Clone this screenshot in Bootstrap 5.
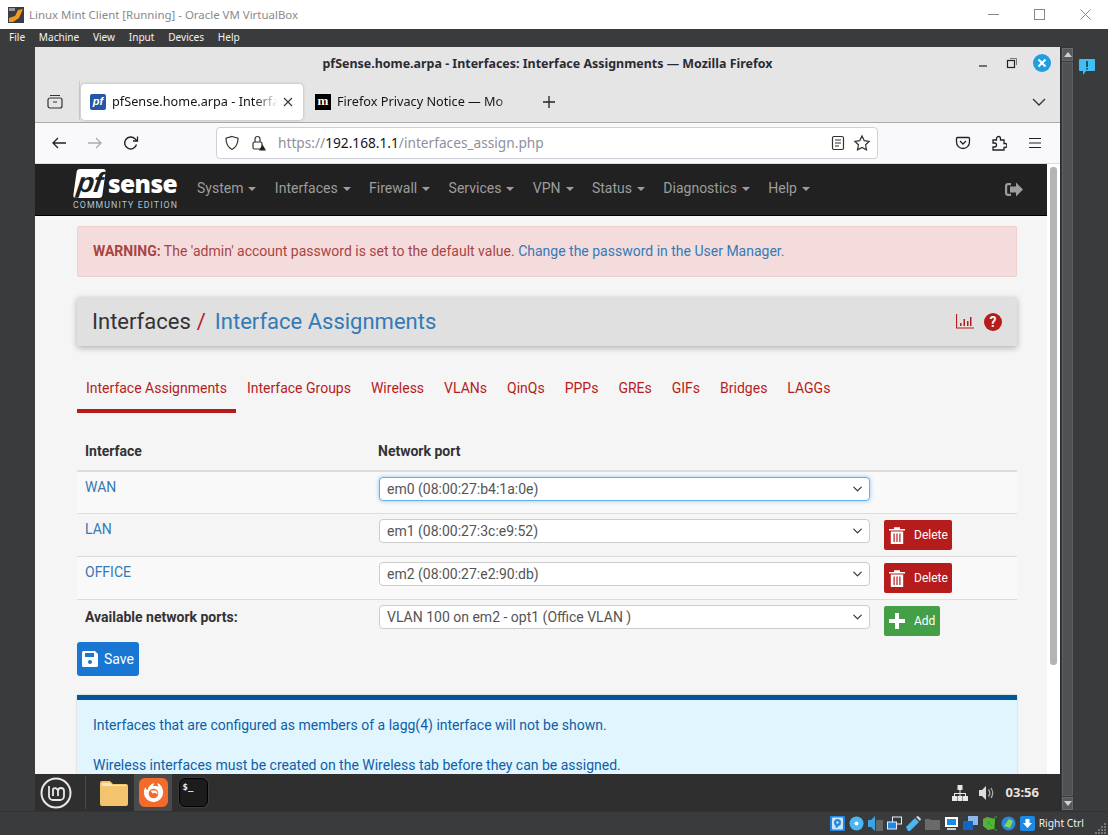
<!DOCTYPE html>
<html lang="en">
<head>
    <meta charset="UTF-8">
    <meta name="viewport" content="width=device-width, initial-scale=1.0">
    <title>Linux Mint Client [Running] - Oracle VM VirtualBox</title>
    <link href="https://cdn.jsdelivr.net/npm/bootstrap@5.3.0/dist/css/bootstrap.min.css" rel="stylesheet">
    <style>
        html, body { height: 835px; overflow: hidden; }
        body { font-family: "Noto Sans", sans-serif; background: #3a3b3d; }
        /* VirtualBox window */
        .vb-title { height: 29px; background: #fff; color: #8a8a8a; font-size: 11.45px; padding-left: 8px; }
        .vb-title svg.vb-logo { margin-right: 5px; }
        .vb-winbtns span { width: 46px; display: flex; justify-content: center; }
        .vb-menu { height: 18px; background: #3a3b3d; color: #f2f2f2; font-size: 10.1px; padding-left: 9px; gap: 13.7px; }
        .vb-main { height: 764px; }
        .vb-gutter { width: 35px; background: #3a3b3d; flex: none; }
        .vb-screen { width: 1025px; flex: none; }
        .vb-scroll { width: 14px; flex: none; background: #36373a; border-left: 1px solid #2a2b2d; padding: 1px 1px; gap: 1px; }
        .vb-scroll .arrow { height: 13px; background: #57585a; border: 1px solid #6a6b6d; flex: none; }
        .vb-scroll .thumb { flex: 1; background: #505153; border: 1px solid #5f6062; }
        .vb-side { flex: 1; background: #3a3b3d; padding: 12px 0 0 5px; }
        .vb-status { height: 24px; background: #3a3b3d; color: #f0f0f0; font-size: 10.3px; padding-right: 2px; gap: 4px; border-top: 1px solid #333; }

        /* Firefox */
        .ff-win { flex: 1; min-height: 0; background: #e5e5e5; }
        .ff-title { height: 34px; flex: none; font-size: 12.45px; font-weight: 700; color: #2b2b33; position: relative; }
        .ff-winbtns { position: absolute; right: 8px; top: 7px; gap: 13px; }
        .ff-close { width: 18px; height: 18px; border-radius: 50%; background: #1f9ee0; margin-right: 1px; }
        .ff-tabs { height: 42px; flex: none; border-bottom: 1px solid #aaa; padding-top: 3px; position: relative; }
        .ff-tabview { width: 45px; border-right: 1px solid #ccc; height: 39px; margin-top: -3px; padding-top: 3px; padding-right: 4px; flex: none; }
        .ff-tab { height: 36px; font-size: 12.7px; color: #15141a; white-space: nowrap; overflow: hidden; }
        .ff-tab.active { width: 222px; margin-left: 1px; background: #fff; border-radius: 4px; box-shadow: 0 0 3px rgba(0,0,0,.25); padding: 0 8px 0 9px; }
        .ff-tab.other { width: 236px; margin-left: 3px; padding: 0 8px 0 9px; }
        .ff-tab .ttl { overflow: hidden; margin-left: 6px; width: 166px; flex: none;
            -webkit-mask-image: linear-gradient(to right, #000 86%, transparent); mask-image: linear-gradient(to right, #000 86%, transparent); }
        .ff-tab.other .ttl { width: 184px; }
        .pf-fav { width: 16px; height: 16px; background: #2456a6; color: #fff; font: italic 700 11px/15px "Liberation Sans", sans-serif; text-align: center; border-radius: 2px; flex: none; }
        .m-fav { width: 16px; height: 16px; background: #000; color: #fff; font: 700 13px/13px "Liberation Serif", serif; text-align: center; flex: none; }
        .ff-toolbar { height: 41px; flex: none; background: #f9f9fb; border-bottom: 1px solid #ddd; position: relative; padding-left: 6px; }
        .ff-navbtn { width: 36px; display: flex; justify-content: center; flex: none; }
        .ff-url { width: 662px; height: 32px; margin-left: 67px; margin-right: 67px; background: #fff; border: 1px solid #cfcfd8; border-radius: 4px; font-size: 13.7px; color: #8f8f9d; padding: 0 6px 0 7px; flex: none; }
        .ff-url b { font-weight: 400; color: #15141a; }
        .ff-lock { margin-left: 10px; }
        .ff-urltext { margin-left: 10px; }

        /* pfSense page */
        .pf-page { flex: 1; min-height: 0; background: #f5f5f5; overflow: hidden; font-family: Roboto, sans-serif; }
        .pf-content { width: 1012px; flex: none; }
        .pf-scroll { flex: 1; background: #fff; padding: 3px 3px 0; }
        .pf-scroll div { height: 498px; background: #b4b4b4; border-radius: 3px; }
        .pf-nav { height: 52px; background: #212121; border-bottom: 1px solid #000; padding: 0 24px 0 39px; flex-wrap: nowrap; }
        .pf-logo { width: 106px; margin-right: 18px; margin-left: -1px; color: #fff; }
        .pf-logo .word { height: 29px; line-height: 29px; padding-left: 2px; margin-top: -1px; white-space: nowrap; }
        .pf-logo .pfbox { display: inline-block; width: 29px; height: 29px; background: #fff; color: #212121; font: italic 700 28px/27px "Liberation Sans", sans-serif; border-radius: 3px; text-align: center; transform: skewX(-8deg); letter-spacing: -1px; }
        .pf-logo .sns { font: 800 24.5px/29px "Open Sans", sans-serif; letter-spacing: -.6px; margin-left: 4px; vertical-align: top; }
        .pf-logo .ced { font: 400 8.8px/9px Roboto, sans-serif; letter-spacing: 1.05px; color: #a9c4dc; white-space: nowrap; margin-top: 3px; }
        .pf-nav .nav { margin-top: -2px; }
        .pf-nav .nav-link { color: #9d9d9d; font-size: 14px; padding: 0; margin-right: 18.4px; }
        .pf-nav .nav-link.dropdown-toggle::after { margin-left: 5px; vertical-align: 2px; border-top-width: 4px; border-left-width: 4px; border-right-width: 4px; }
        .pf-body { padding: 10px 30px 0 42px; }
        .pf-alert { height: 51px; margin-bottom: 20px; padding: 0 15px; background: #f4dcdc; border: 1px solid #f0cfcf; border-radius: 2px; color: #a94442; font-size: 14px; display: flex; align-items: center; }
        .pf-alert a, .pf-crumb a { color: #337ab7; text-decoration: none; }
        .pf-crumb { height: 49px; background: #e0e0e0; box-shadow: 0 2px 6px rgba(0,0,0,.28); border-radius: 2px; padding: 0 15px; font-size: 22px; color: #333; margin-bottom: 21px; }
        .pf-crumb .sep { color: #b71c1c; margin: 0 9px 0 6px; }
        .pf-q { width: 18px; height: 18px; border-radius: 50%; background: #b71c1c; color: #f5f5f5; font: 700 14px/18px Roboto, sans-serif; text-align: center; margin-left: 10px; }
        .pf-tabs { height: 46px; border-bottom: 0; }
        .pf-tabs .nav-link { height: 46px; padding: 11px 10px 0 10px; font-size: 14px; color: #b71c1c; margin: 0; border: 0; border-radius: 0; line-height: 21px; }
        .pf-tabs .nav-link.active { border-bottom: 4px solid #b71c1c; background: none; color: #b71c1c; padding-left: 9px; padding-right: 9px; margin-right: 1px; }
        .pf-table { margin: 25px 0 0; font-size: 14px; --bs-table-bg: transparent; table-layout: fixed; }
        .pf-table th, .pf-table td { padding: 0 8px; border-color: #ddd; vertical-align: top; color: #333; }
        .pf-table thead th { height: 33px; border-bottom: 2px solid #ddd; font-weight: 700; padding-top: 3px; color: #333; }
        .pf-table thead th:nth-child(2) { padding-left: 7px; }
        .pf-table tbody td { height: 43px; padding-top: 5px; }
        .pf-table tbody tr:first-child td { height: 42px; }
        .pf-table tbody tr:last-child td { border-bottom: 0; height: 42px; }
        .pf-table tbody tr.odd td { background: #f9f9f9; }
        .pf-table a { color: #337ab7; text-decoration: none; display: block; margin-top: 0; line-height: 20px; }
        .pf-avail { display: block; padding-top: 2px; }
        .pf-table .form-select { width: 491px; height: 24px; margin-top: 0; padding: 0 24px 0 7px; font-size: 14px; line-height: 22px; color: #555; background-color: #fff; border: 1px solid #ccc; border-radius: 4px; background-position: right 5px center; background-size: 13px 10px; }
        .pf-table .form-select.focused { border-color: #66afe9; box-shadow: 0 0 4px rgba(102,175,233,.7); }
        .pf-btn { height: 30px; font-size: 12px; color: #fff; border-radius: 2px; padding: 0 0 0 5px; margin-top: 1px; border: 0; gap: 9px; display: inline-flex; align-items: center; }
        .pf-btn.del { width: 68px; background: #b71c1c; }
        .pf-btn.add { width: 56px; background: #43a047; }
        .pf-save { width: 62px; height: 34px; margin-top: 1px; padding: 0 0 0 5px; background: #1976d2; color: #fff; border: 0; border-radius: 3px; font-size: 14px; gap: 6px; display: flex; align-items: center; }
        .pf-info { margin-top: 19px; height: 200px; background: #e1f5fe; border-top: 5px solid #01579b; box-shadow: 0 0 2px rgba(0,0,0,.2); padding: 15px 16px; color: #0d5fa8; font-size: 14px; line-height: 20px; }
        .pf-info p { margin: 0 0 20px; }

        /* Mint panel */
        .mint-panel { height: 37px; flex: none; background: #2f2f2f; color: #e8e8e8; }
        .mint-menu { width: 51px; height: 37px; flex: none; justify-content: center; padding-right: 9px; position: relative; }
        .mint-menu::after { content: ""; position: absolute; right: 0; top: 2px; bottom: 2px; border-right: 1px solid #4a4a4a; }
        .mint-launch { width: 38px; height: 37px; flex: none; justify-content: center; }
        .mint-launch.on { background: #4a4a4a; }
        .mint-term { width: 29px; height: 29px; background: #1c1c1c; border: 1px solid #000; box-shadow: 0 0 0 1px #3c3c3c; border-radius: 6px; color: #eee; font: 700 9px/12px "DejaVu Sans Mono", monospace; padding: 2px 3px; }
        .mint-clock { font: 700 13px/1 "Noto Sans", sans-serif; margin-left: 11px; margin-right: 21px; color: #e4e4e4; }
    </style>
</head>
<body>
    <div class="vb-title d-flex align-items-center">
        <svg class="vb-logo" width="16" height="16" viewBox="0 0 16 16"><rect width="16" height="16" fill="#3a3d45"/><path d="M1 11l6-2 3-6 5-1-4 9-6 4H1z" fill="#f09a1f"/><rect x="1" y="1" width="6" height="3" fill="#999"/></svg>
        <span class="flex-grow-1">Linux Mint Client [Running] - Oracle VM VirtualBox</span>
        <div class="vb-winbtns d-flex align-items-center">
            <span><svg width="11" height="11" viewBox="0 0 11 11"><path d="M0 5.500h11" stroke="#888"/></svg></span>
            <span><svg width="11" height="11" viewBox="0 0 11 11"><rect x=".5" y=".5" width="10" height="10" fill="none" stroke="#888"/></svg></span>
            <span><svg width="11" height="11" viewBox="0 0 11 11"><path d="M.5.500l10 10M10.500.500l-10 10" stroke="#888"/></svg></span>
        </div>
    </div>
    <div class="vb-menu d-flex align-items-center">
        <span>File</span><span>Machine</span><span>View</span><span>Input</span><span>Devices</span><span>Help</span>
    </div>

    <div class="vb-main d-flex">
        <div class="vb-gutter"></div>
        <div class="vb-screen d-flex flex-column">
            <div class="ff-win d-flex flex-column overflow-hidden">
                <div class="ff-title d-flex align-items-center justify-content-center">
                    pfSense.home.arpa - Interfaces: Interface Assignments — Mozilla Firefox
                    <div class="ff-winbtns d-flex align-items-center">
                        <svg width="16" height="16" viewBox="0 0 16 16"><path d="M4 11h8" stroke="#222" stroke-width="1.2"/></svg>
                        <svg width="16" height="16" viewBox="0 0 16 16"><rect x="3.500" y="5.500" width="7" height="7" fill="none" stroke="#222" stroke-width="1.2"/><path d="M6 3.500h6.500V10" fill="none" stroke="#777"/></svg>
                        <div class="ff-close d-flex align-items-center justify-content-center"><svg width="10" height="10" viewBox="0 0 10 10"><path d="M1.500 1.500l7 7M8.500 1.500l-7 7" stroke="#fff" stroke-width="2"/></svg></div>
                    </div>
                </div>
                <div class="ff-tabs d-flex">
                    <div class="ff-tabview d-flex justify-content-center align-items-center">
                        <svg width="18" height="18" viewBox="0 0 18 18" fill="none" stroke="#333" stroke-width="1.2"><rect x="2" y="5" width="14" height="10" rx="2"/><path d="M4 2.500h10M7 9h4"/></svg>
                    </div>
                    <div class="ff-tab active d-flex align-items-center">
                        <span class="pf-fav">pf</span>
                        <span class="ttl">pfSense.home.arpa - Interfa</span>
                        <svg class="ms-1" width="12" height="12" viewBox="0 0 12 12"><path d="M2 2l8 8M10 2l-8 8" stroke="#333" stroke-width="1.1"/></svg>
                    </div>
                    <div class="ff-tab other d-flex align-items-center">
                        <span class="m-fav">m</span>
                        <span class="ttl">Firefox Privacy Notice — Mo</span>
                    </div>
                    <div class="d-flex align-items-center" style="height:36px">
                        <svg width="14" height="14" viewBox="0 0 14 14"><path d="M7 1v12M1 7h12" stroke="#222" stroke-width="1.3"/></svg>
                    </div>
                    <div class="d-flex align-items-center ms-auto" style="height:36px;padding-right:14px">
                        <svg width="14" height="10" viewBox="0 0 14 10" fill="none"><path d="M1 2l6 6 6-6" stroke="#333" stroke-width="1.3"/></svg>
                    </div>
                </div>
                <div class="ff-toolbar d-flex align-items-center">
                    <span class="ff-navbtn"><svg width="16" height="16" viewBox="0 0 16 16" fill="none" stroke="#222" stroke-width="1.3"><path d="M15 8H2M7 3L2 8l5 5"/></svg></span>
                    <span class="ff-navbtn"><svg width="16" height="16" viewBox="0 0 16 16" fill="none" stroke="#aaa" stroke-width="1.3"><path d="M1 8h13M9 3l5 5-5 5"/></svg></span>
                    <span class="ff-navbtn"><svg width="16" height="16" viewBox="0 0 16 16" fill="none" stroke="#222" stroke-width="1.3"><path d="M13.500 9.500A6 6 0 1 1 12 3.800L14 6"/><path d="M14.500 1.500V6H10"/></svg></span>
                    <div class="ff-url d-flex align-items-center">
                        <svg width="16" height="16" viewBox="0 0 16 16" fill="none" stroke="#333" stroke-width="1.2"><path d="M8 1.500l6 1.800c0 5.500-1.800 9-6 11.200C3.800 12.300 2 8.800 2 3.300z"/></svg>
                        <svg class="ff-lock" width="18" height="18" viewBox="0 0 18 18" fill="none" stroke="#333" stroke-width="1.2"><rect x="3" y="8" width="9" height="7" rx="1.500"/><path d="M5 8V5a2.500 2.500 0 0 1 5 0v3"/><path d="M12.500 10.500l-3.500 6h7z" fill="#222" stroke="none"/></svg>
                        <span class="ff-urltext flex-grow-1">https://<b>192.168.1.1</b>/interfaces_assign.php</span>
                        <svg width="14" height="16" viewBox="0 0 14 16" fill="none" stroke="#333" stroke-width="1.2"><rect x="1.500" y="1.500" width="11" height="13" rx="1.500"/><path d="M4 5h6M4 8h6M4 11h4"/></svg>
                        <svg class="ms-2" width="18" height="18" viewBox="0 0 18 18" fill="none" stroke="#333" stroke-width="1.2"><path d="M9 2l2.200 4.600 5 .7-3.600 3.500.9 5L9 13.400 4.500 15.800l.9-5L1.800 7.300l5-.7z"/></svg>
                    </div>
                    <span class="ff-navbtn"><svg width="16" height="16" viewBox="0 0 16 16" fill="none" stroke="#222" stroke-width="1.3"><path d="M2.500 2.500h11a1 1 0 0 1 1 1V7a6.500 6.500 0 0 1-13 0V3.500a1 1 0 0 1 1-1z"/><path d="M5 6l3 3 3-3"/></svg></span>
                    <span class="ff-navbtn"><svg width="16" height="16" viewBox="0 0 16 16" fill="none" stroke="#222" stroke-width="1.3"><path d="M2 5h3.500V3.500a2 2 0 0 1 4 0V5H13v3.500h1a2 2 0 0 1 0 4h-1V15H2v-3h1.500a2 2 0 0 0 0-4H2z"/></svg></span>
                    <span class="ff-navbtn"><svg width="16" height="14" viewBox="0 0 16 14" fill="none" stroke="#222" stroke-width="1.2"><path d="M2 2.500h12M2 7h12M2 11.500h12"/></svg></span>
                </div>

                <div class="pf-page d-flex">
                    <div class="pf-content">
                        <nav class="pf-nav navbar d-flex align-items-center justify-content-start">
                            <div class="pf-logo">
                                <div class="word"><span class="pfbox">pf</span><span class="sns">sense</span></div>
                                <div class="ced">COMMUNITY EDITION</div>
                            </div>
                            <ul class="nav">
                                <li class="nav-item"><a class="nav-link dropdown-toggle" href="#">System</a></li>
                                <li class="nav-item"><a class="nav-link dropdown-toggle" href="#">Interfaces</a></li>
                                <li class="nav-item"><a class="nav-link dropdown-toggle" href="#">Firewall</a></li>
                                <li class="nav-item"><a class="nav-link dropdown-toggle" href="#">Services</a></li>
                                <li class="nav-item"><a class="nav-link dropdown-toggle" href="#">VPN</a></li>
                                <li class="nav-item"><a class="nav-link dropdown-toggle" href="#">Status</a></li>
                                <li class="nav-item"><a class="nav-link dropdown-toggle" href="#">Diagnostics</a></li>
                                <li class="nav-item"><a class="nav-link dropdown-toggle" href="#">Help</a></li>
                            </ul>
                            <svg class="ms-auto" width="18" height="15" viewBox="0 0 18 15" fill="#9d9d9d"><path d="M6 1H3a3 3 0 0 0-3 3v7a3 3 0 0 0 3 3h3v-2.200H3A.8.800 0 0 1 2.200 11V4A.8.800 0 0 1 3 3.200h3z"/><path d="M11 .5v4H5v6h6v4l7-7z"/></svg>
                        </nav>
                        <div class="pf-body">
                            <div class="pf-alert">
                                <span><strong>WARNING:</strong> The 'admin' account password is set to the default value. <a href="#">Change the password in the User Manager.</a></span>
                            </div>
                            <div class="pf-crumb d-flex align-items-center">
                                <span>Interfaces</span><span class="sep">/</span><a href="#">Interface Assignments</a>
                                <svg class="ms-auto" width="18" height="15" viewBox="0 0 18 15"><path d="M.5 0v14H18" fill="none" stroke="#b71c1c" stroke-width="1.200"/><path d="M4 9h1.500v3H4zM7.500 5H9v7H7.500zM11 7h1.500v5H11zM14 3h1.500v9H14z" fill="#b71c1c"/></svg>
                                <span class="pf-q">?</span>
                            </div>
                            <ul class="nav pf-tabs">
                                <li class="nav-item"><a class="nav-link active" href="#">Interface Assignments</a></li>
                                <li class="nav-item"><a class="nav-link" href="#">Interface Groups</a></li>
                                <li class="nav-item"><a class="nav-link" href="#">Wireless</a></li>
                                <li class="nav-item"><a class="nav-link" href="#">VLANs</a></li>
                                <li class="nav-item"><a class="nav-link" href="#">QinQs</a></li>
                                <li class="nav-item"><a class="nav-link" href="#">PPPs</a></li>
                                <li class="nav-item"><a class="nav-link" href="#">GREs</a></li>
                                <li class="nav-item"><a class="nav-link" href="#">GIFs</a></li>
                                <li class="nav-item"><a class="nav-link" href="#">Bridges</a></li>
                                <li class="nav-item"><a class="nav-link" href="#">LAGGs</a></li>
                            </ul>
                            <table class="table pf-table">
                                <colgroup><col style="width:294px"><col style="width:505px"><col></colgroup>
                                <thead><tr><th>Interface</th><th>Network port</th><th></th></tr></thead>
                                <tbody>
                                    <tr class="odd">
                                        <td><a href="#">WAN</a></td>
                                        <td><select class="form-select focused"><option>em0 (08:00:27:b4:1a:0e)</option></select></td>
                                        <td></td>
                                    </tr>
                                    <tr>
                                        <td><a href="#">LAN</a></td>
                                        <td><select class="form-select"><option>em1 (08:00:27:3c:e9:52)</option></select></td>
                                        <td><button class="btn pf-btn del"><svg width="16" height="18" viewBox="0 0 16 18" fill="#fff"><path d="M0 3h16v1.600H0zM5 1.200h6V3H5z"/><path d="M1.800 5.500h12.400V18H1.800zM4.500 7.500v8.500h1.200V7.500zM7.400 7.500v8.500h1.200V7.500zM10.300 7.500v8.500h1.200V7.500z" fill-rule="evenodd"/></svg>Delete</button></td>
                                    </tr>
                                    <tr class="odd">
                                        <td><a href="#">OFFICE</a></td>
                                        <td><select class="form-select"><option>em2 (08:00:27:e2:90:db)</option></select></td>
                                        <td><button class="btn pf-btn del"><svg width="16" height="18" viewBox="0 0 16 18" fill="#fff"><path d="M0 3h16v1.600H0zM5 1.200h6V3H5z"/><path d="M1.800 5.500h12.400V18H1.800zM4.500 7.500v8.500h1.200V7.500zM7.400 7.500v8.500h1.200V7.500zM10.300 7.500v8.500h1.200V7.500z" fill-rule="evenodd"/></svg>Delete</button></td>
                                    </tr>
                                    <tr>
                                        <td><strong class="pf-avail">Available network ports:</strong></td>
                                        <td><select class="form-select"><option>VLAN 100 on em2 - opt1 (Office VLAN )</option></select></td>
                                        <td><button class="btn pf-btn add"><svg width="16" height="16" viewBox="0 0 16 16" fill="#fff"><path d="M6 0h4v6h6v4h-6v6H6v-6H0V6h6z"/></svg>Add</button></td>
                                    </tr>
                                </tbody>
                            </table>
                            <button class="btn pf-save"><svg width="16" height="16" viewBox="0 0 16 16"><path fill-rule="evenodd" fill="#fff" d="M1.500 0H13l3 3v11.500a1.500 1.500 0 0 1-1.500 1.500h-13A1.500 1.500 0 0 1 0 14.500v-13A1.500 1.500 0 0 1 1.500 0zM3 2v4h9V2z"/><circle cx="8" cy="11" r="2" fill="#1976d2"/></svg>Save</button>
                            <div class="pf-info">
                                <p>Interfaces that are configured as members of a lagg(4) interface will not be shown.</p>
                                <p>Wireless interfaces must be created on the Wireless tab before they can be assigned.</p>
                            </div>
                        </div>
                    </div>
                    <div class="pf-scroll"><div></div></div>
                </div>
            </div>

            <div class="mint-panel d-flex align-items-center">
                <div class="mint-menu d-flex align-items-center">
                    <svg width="32" height="32" viewBox="0 0 32 32" fill="none" stroke="#e8e8e8"><circle cx="16" cy="16" r="14.500" stroke-width="2"/><path d="M9 9v10a4 4 0 0 0 4 4h7a4 4 0 0 0 4-4v-5a3 3 0 0 0-6 0v5M18 14a3 3 0 0 0-5-2v7" stroke-width="1.800"/></svg>
                </div>
                <div class="mint-launch d-flex align-items-center" style="margin-left:9px">
                    <svg width="30" height="28" viewBox="0 0 30 28"><path d="M1 4a2 2 0 0 1 2-2h8l3 3h13a2 2 0 0 1 2 2v18a2 2 0 0 1-2 2H3a2 2 0 0 1-2-2z" fill="#f4c36d"/><path d="M3 4h8l2 2h14v1H3z" fill="#f9e6c0"/></svg>
                </div>
                <div class="mint-launch on d-flex align-items-center" style="margin-left:1px">
                    <svg width="29" height="29" viewBox="0 0 30 30"><rect width="30" height="30" rx="6" fill="#f26b2d"/><path d="M19 5c4 2 6 6 6 10a10 10 0 1 1-20 0c0-2 .5-4 2-5.500 0 1.500 1 2.500 2 3 .5-3 3-6.500 7-7 -1 1-1.500 2-1 3 2-.5 4-.5 5 .5-.5-1.500-.5-3-1-4z" fill="#fff"/><circle cx="15" cy="16" r="5" fill="#f26b2d"/><path d="M12 13h5a3.500 3.500 0 0 1 2 4c-1-1.500-3-2-5-1z" fill="#fff"/></svg>
                </div>
                <div class="mint-launch d-flex align-items-center" style="margin-left:2px">
                    <div class="mint-term">$_</div>
                </div>
                <div class="ms-auto d-flex align-items-center">
                    <svg width="16" height="16" viewBox="0 0 16 16" fill="#e8e8e8"><rect x="5.500" y="0" width="5" height="5"/><rect x="0" y="11" width="5" height="5"/><rect x="5.500" y="11" width="5" height="5"/><rect x="11" y="11" width="5" height="5"/><path d="M7.500 5h1v3h5.500v3h-1V9H8.500v2h-1V9H3v2H2V8h5.500z"/></svg>
                    <svg style="margin-left:11px" width="16" height="16" viewBox="0 0 16 16" fill="none"><path d="M0 5h3l4-4v14l-4-4H0z" fill="#dcdcdc"/><path d="M9.500 4.500c1.500 2 1.500 5 0 7M12 3c2 3 2 7 0 10" stroke="#aaa" stroke-width="1.300"/></svg>
                    <span class="mint-clock">03:56</span>
                </div>
            </div>
        </div>
        <div class="vb-scroll d-flex flex-column">
            <div class="arrow d-flex align-items-center justify-content-center"><svg width="8" height="5" viewBox="0 0 8 5"><path d="M4 0l4 5H0z" fill="#cfcfcf"/></svg></div>
            <div class="thumb"></div>
            <div class="arrow d-flex align-items-center justify-content-center"><svg width="8" height="5" viewBox="0 0 8 5"><path d="M0 0h8L4 5z" fill="#cfcfcf"/></svg></div>
        </div>
        <div class="vb-side">
            <svg class="d-block" width="16" height="16" viewBox="0 0 16 16"><path d="M1 0h14a1 1 0 0 1 1 1v10a1 1 0 0 1-1 1H7l-3 4v-4H1a1 1 0 0 1-1-1V1a1 1 0 0 1 1-1z" fill="#3ec0f4"/><path d="M7.300 2h1.400v6H7.300zM7.300 9h1.400v1.500H7.300z" fill="#123"/></svg>
        </div>
    </div>

    <div class="vb-status d-flex align-items-center justify-content-end">
        <svg width="15" height="15" viewBox="0 0 15 15"><rect width="15" height="15" rx="1" fill="#1e88e5"/><rect x="2" y="1.500" width="11" height="12" rx="1" fill="#cfe4f7"/><circle cx="7.500" cy="6.500" r="3.500" fill="#1e88e5"/><circle cx="7.500" cy="6.500" r="1.200" fill="#cfe4f7"/><path d="M5 11l3-3 1 1-2 3z" fill="#1e88e5"/></svg>
        <svg width="15" height="15" viewBox="0 0 15 15"><circle cx="7.500" cy="7.500" r="7" fill="#4db6f0"/><circle cx="7.500" cy="7.500" r="2" fill="#fff"/></svg>
        <svg width="15" height="15" viewBox="0 0 15 15"><path d="M0 4h3l4-4v15l-4-4H0z" fill="#3aa4e8"/><rect x="8" y="4" width="7" height="11" fill="#666"/></svg>
        <svg width="15" height="15" viewBox="0 0 15 15" fill="none" stroke="#eef"><rect x="5.500" y="1" width="9" height="7"/><rect x=".5" y="6" width="9" height="7" fill="#1e88e5"/></svg>
        <svg width="15" height="15" viewBox="0 0 15 15"><path d="M0 11l9-9 4 4-9 9H2z" fill="#4db6f0"/><path d="M10 1l2-1 3 3-1 2z" fill="#ddd"/></svg>
        <svg width="15" height="15" viewBox="0 0 15 15"><path d="M0 3h5l1 1h9v10H0z" fill="#6a6a6a"/></svg>
        <svg width="15" height="15" viewBox="0 0 15 15" fill="none"><rect x="1" y="1" width="13" height="10" fill="#fff"/><rect x="3" y="3" width="9" height="6" fill="#1e88e5"/><path d="M3 13h9" stroke="#fff" stroke-width="1.500"/></svg>
        <svg width="15" height="15" viewBox="0 0 15 15"><rect x="5" y="0" width="10" height="9" fill="#8ab8e8"/><rect x="0" y="5" width="10" height="9" fill="#1565c0"/></svg>
        <svg width="15" height="15" viewBox="0 0 15 15"><path d="M1 3l4-2 8 2-1 10-6 1-5-4z" fill="#5cae3a"/><path d="M5 5l5 5M5 9l3-4" stroke="#0b3" stroke-width="1"/><rect x="13" y="1" width="2" height="13" fill="#111" stroke="#5f3" stroke-width=".5"/></svg>
        <svg width="15" height="15" viewBox="0 0 15 15"><circle cx="7.500" cy="7.500" r="7" fill="#2f86d6"/><path d="M3 10l5-7 4 2-3 7z" fill="#7ed957"/></svg>
        <svg width="15" height="15" viewBox="0 0 15 15"><rect width="15" height="15" rx="2" fill="#1e88e5"/><path d="M5.500 3h4v4H12l-4.500 5L3 7h2.500z" fill="#fff"/></svg>
        <span>Right Ctrl</span>
        <svg style="margin-left:7px;margin-top:10px" width="11" height="11" viewBox="0 0 11 11" fill="#777"><path d="M9 0h2v2H9zM6 3h2v2H6zM9 3h2v2H9zM3 6h2v2H3zM6 6h2v2H6zM9 6h2v2H9zM0 9h2v2H0zM3 9h2v2H3zM6 9h2v2H6zM9 9h2v2H9z"/></svg>
    </div>

    <script src="https://cdn.jsdelivr.net/npm/bootstrap@5.3.0/dist/js/bootstrap.bundle.min.js"></script>
</body>
</html>
